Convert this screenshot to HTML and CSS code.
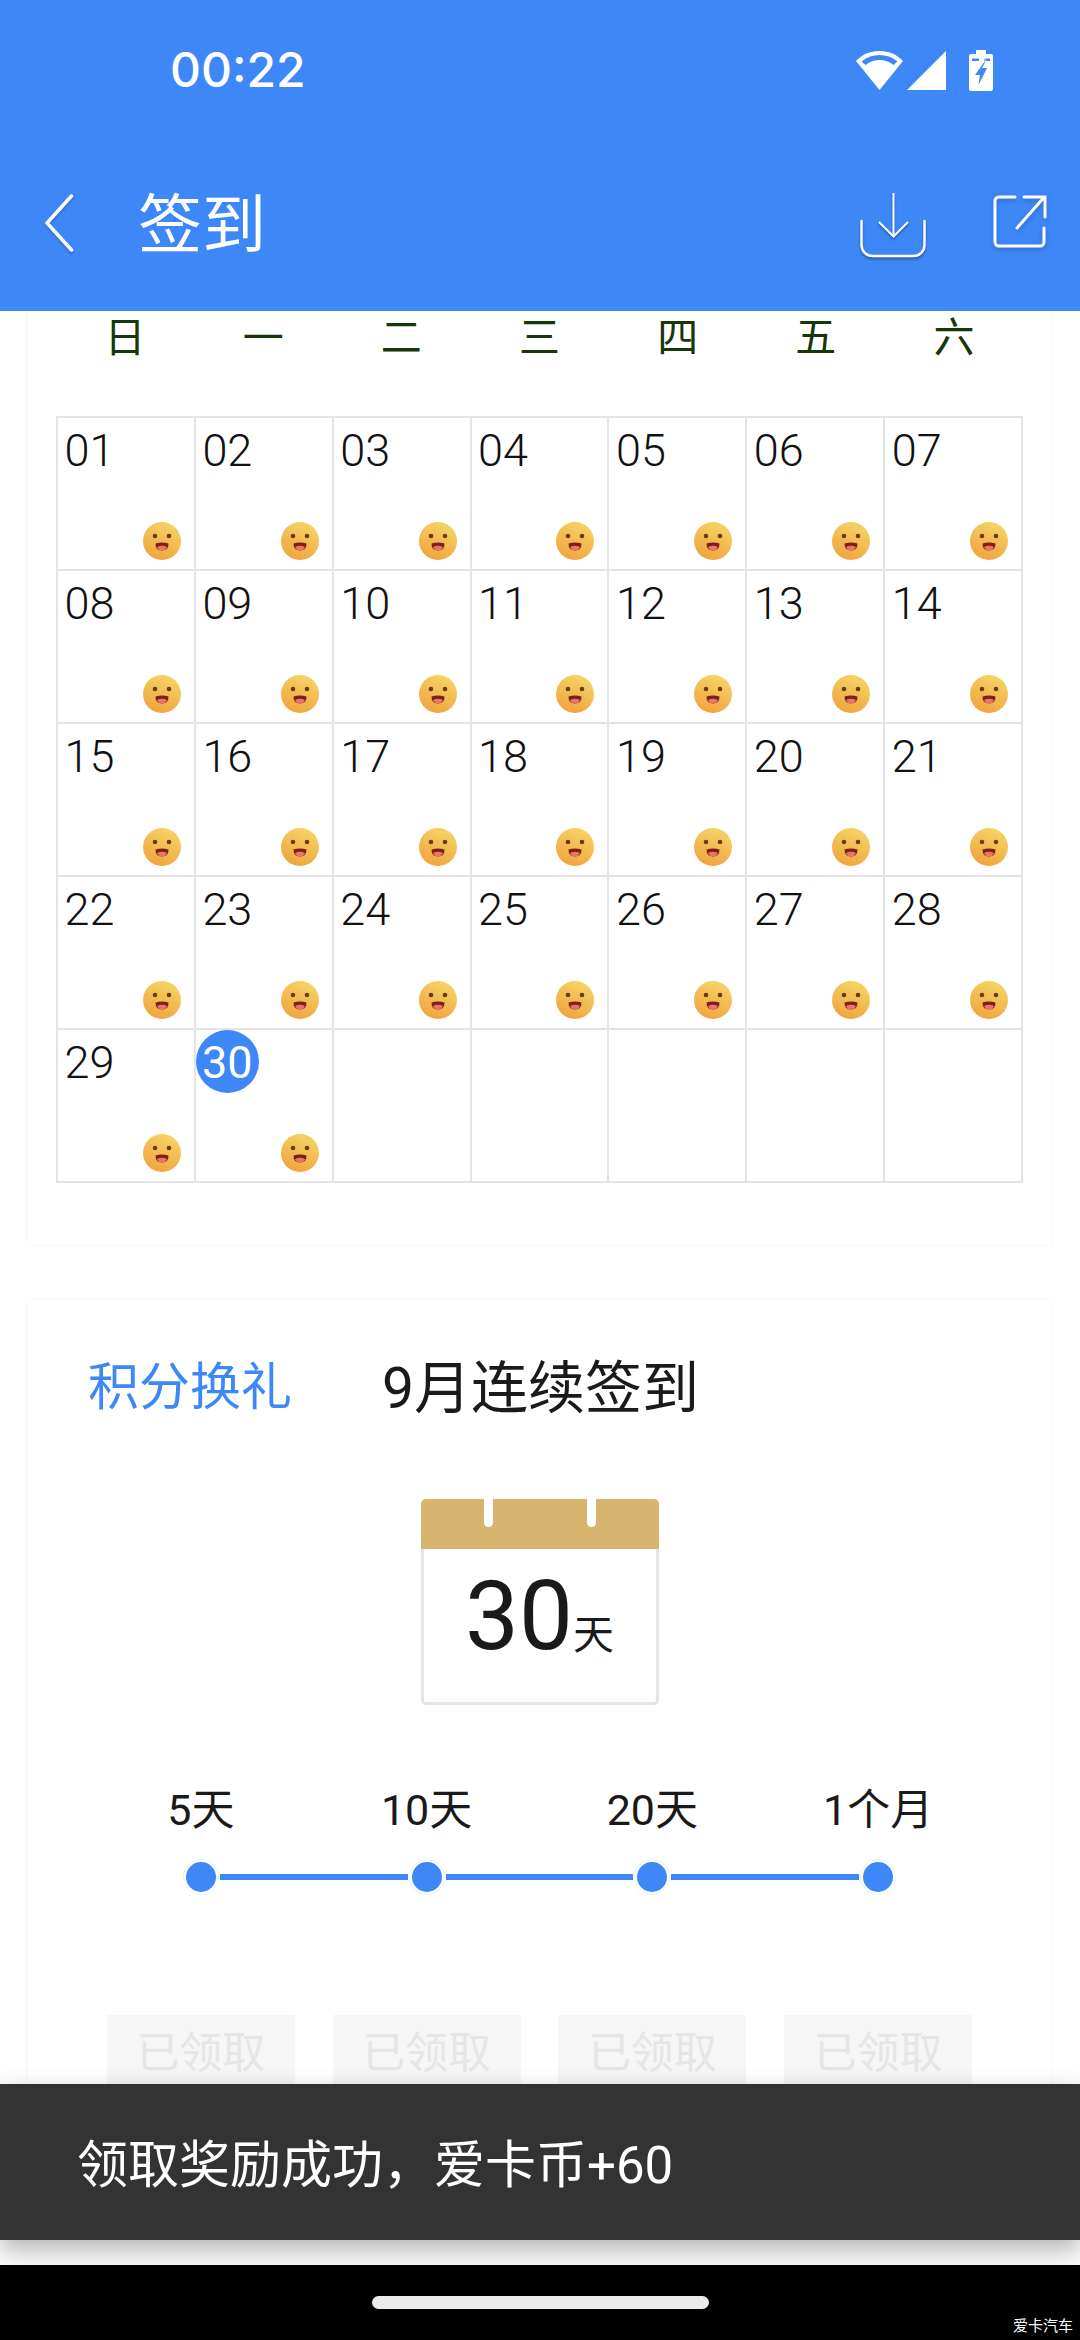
FILE: index.html
```html
<!DOCTYPE html>
<html lang="zh-CN">
<head>
<meta charset="utf-8">
<title>签到</title>
<link rel="stylesheet" href="styles.css">
</head>
<body>
<svg class="defs" width="0" height="0" aria-hidden="true">
  <defs>
    <linearGradient id="faceFill" x1="0.7" y1="0" x2="0.3" y2="1">
      <stop offset="0" stop-color="#f5d566"/>
      <stop offset="1" stop-color="#f0a33f"/>
    </linearGradient>
    <symbol id="face" viewBox="0 0 38 38">
      <circle cx="19" cy="19" r="19" fill="url(#faceFill)"/>
      <circle cx="12" cy="14" r="2.3" fill="#6e3a14"/>
      <circle cx="26" cy="14" r="2.3" fill="#6e3a14"/>
      <path d="M12.500 21.500 Q19 19.500 25.500 21.500 Q25.500 28.500 19 28.500 Q12.500 28.500 12.500 21.500Z" fill="#7f1f1a"/>
      <path d="M14 25 Q19 22.500 24 25 Q22.500 28.500 19 28.500 Q15.500 28.500 14 25Z" fill="#e8746a"/>
    </symbol>
  </defs>
</svg>
<div class="page">
  <header class="header">
    <div class="status">
      <span class="time">00:22</span>
      <div class="status-icons">
        <svg class="ic-wifi" viewBox="0 0 47 39"><path fill="#fff" d="M23.5 39 L0 10 C6 3.5 14 0 23.5 0 S41 3.5 47 10Z"/><path fill="#3d87f7" d="M5.5 10.5 C11 6 17 4 23.5 4 S36 6 41.5 10.5 L37.5 14 C33 10.5 29 9 23.5 9 S14 10.5 9.5 14Z"/></svg>
        <svg class="ic-signal" viewBox="0 0 39 39"><path fill="#fff" d="M39 0V39H0Z"/></svg>
        <svg class="ic-battery" viewBox="0 0 24 41"><path fill="#fff" d="M7 0H17V4H22Q24 4 24 6V39Q24 41 22 41H2Q0 41 0 39V6Q0 4 2 4H7Z"/><path fill="#3d87f7" d="M3 8.5H10V11H3ZM15.500 8.500H21V11H15.500ZM18 8 6 25H11L9.500 35 18 18H13Z"/></svg>
      </div>
    </div>
    <div class="appbar">
      <svg class="ic-back" viewBox="0 0 30 58"><path d="M27.500 2 3 29 27.500 56" fill="none" stroke="#fff" stroke-width="3.500" stroke-linecap="round" stroke-linejoin="round"/></svg>
      <h1 class="title">签到</h1>
      <svg class="ic-download" viewBox="0 0 66 65"><path d="M1.500 28V52A11 11 0 0 0 12.500 63H53.500A11 11 0 0 0 64.500 52V28" fill="none" stroke="#fff" stroke-width="2.500" stroke-linecap="round"/><path d="M33.500 0V43M19 29 33.500 43.500 48 29" fill="none" stroke="#fff" stroke-width="2"/></svg>
      <svg class="ic-share" viewBox="0 0 54 54"><path d="M22 2H6A4 4 0 0 0 2 6V47A4 4 0 0 0 6 51H47A4 4 0 0 0 51 47V33M24 33 50 3.500M31 2H52V22" fill="none" stroke="#fff" stroke-width="3" stroke-linecap="round"/></svg>
    </div>
  </header>

  <main class="main">
    <section class="card card-cal">
      <div class="weekdays">
        <span>日</span><span>一</span><span>二</span><span>三</span><span>四</span><span>五</span><span>六</span>
      </div>
      <div class="month">
        <div class="cell"><span class="date">01</span><svg class="face"><use href="#face"/></svg></div>
        <div class="cell"><span class="date">02</span><svg class="face"><use href="#face"/></svg></div>
        <div class="cell"><span class="date">03</span><svg class="face"><use href="#face"/></svg></div>
        <div class="cell"><span class="date">04</span><svg class="face"><use href="#face"/></svg></div>
        <div class="cell"><span class="date">05</span><svg class="face"><use href="#face"/></svg></div>
        <div class="cell"><span class="date">06</span><svg class="face"><use href="#face"/></svg></div>
        <div class="cell"><span class="date">07</span><svg class="face"><use href="#face"/></svg></div>
        <div class="cell"><span class="date">08</span><svg class="face"><use href="#face"/></svg></div>
        <div class="cell"><span class="date">09</span><svg class="face"><use href="#face"/></svg></div>
        <div class="cell"><span class="date">10</span><svg class="face"><use href="#face"/></svg></div>
        <div class="cell"><span class="date">11</span><svg class="face"><use href="#face"/></svg></div>
        <div class="cell"><span class="date">12</span><svg class="face"><use href="#face"/></svg></div>
        <div class="cell"><span class="date">13</span><svg class="face"><use href="#face"/></svg></div>
        <div class="cell"><span class="date">14</span><svg class="face"><use href="#face"/></svg></div>
        <div class="cell"><span class="date">15</span><svg class="face"><use href="#face"/></svg></div>
        <div class="cell"><span class="date">16</span><svg class="face"><use href="#face"/></svg></div>
        <div class="cell"><span class="date">17</span><svg class="face"><use href="#face"/></svg></div>
        <div class="cell"><span class="date">18</span><svg class="face"><use href="#face"/></svg></div>
        <div class="cell"><span class="date">19</span><svg class="face"><use href="#face"/></svg></div>
        <div class="cell"><span class="date">20</span><svg class="face"><use href="#face"/></svg></div>
        <div class="cell"><span class="date">21</span><svg class="face"><use href="#face"/></svg></div>
        <div class="cell"><span class="date">22</span><svg class="face"><use href="#face"/></svg></div>
        <div class="cell"><span class="date">23</span><svg class="face"><use href="#face"/></svg></div>
        <div class="cell"><span class="date">24</span><svg class="face"><use href="#face"/></svg></div>
        <div class="cell"><span class="date">25</span><svg class="face"><use href="#face"/></svg></div>
        <div class="cell"><span class="date">26</span><svg class="face"><use href="#face"/></svg></div>
        <div class="cell"><span class="date">27</span><svg class="face"><use href="#face"/></svg></div>
        <div class="cell"><span class="date">28</span><svg class="face"><use href="#face"/></svg></div>
        <div class="cell"><span class="date">29</span><svg class="face"><use href="#face"/></svg></div>
        <div class="cell"><span class="date today">30</span><svg class="face"><use href="#face"/></svg></div>
        <div class="cell"></div>
        <div class="cell"></div>
        <div class="cell"></div>
        <div class="cell"></div>
        <div class="cell"></div>
      </div>
    </section>

    <section class="card card-reward">
      <div class="tabs">
        <span class="tab-link">积分换礼</span>
        <span class="tab-title">9月连续签到</span>
      </div>
      <div class="calendar">
        <div class="calendar-top"><i class="notch"></i><i class="notch"></i></div>
        <div class="calendar-body"><span class="calendar-num">30</span><span class="calendar-unit">天</span></div>
      </div>
      <div class="step-labels">
        <span>5天</span><span>10天</span><span>20天</span><span>1个月</span>
      </div>
      <div class="track">
        <i class="dot"></i><i class="line"></i><i class="dot"></i><i class="line"></i><i class="dot"></i><i class="line"></i><i class="dot"></i>
      </div>
      <div class="claims">
        <span class="claim">已领取</span><span class="claim">已领取</span><span class="claim">已领取</span><span class="claim">已领取</span>
      </div>
    </section>
  </main>

  <div class="toast">领取奖励成功，爱卡币+60</div>

  <footer class="nav">
    <i class="handle"></i>
    <span class="watermark">爱卡汽车</span>
  </footer>
</div>
</body>
</html>
```

FILE: styles.css
```css
* { box-sizing: border-box; }
html, body { margin: 0; padding: 0; }
body {
  width: 1080px;
  height: 2340px;
  background: #fefefe;
  color: #1a1a1a;
  font-family: Roboto, "Noto Sans CJK SC", sans-serif;
}
i { display: block; }
.defs { position: absolute; }
.page {
  position: relative;
  width: 1080px;
  height: 2340px;
  overflow: hidden;
  display: flex;
  flex-direction: column;
}

/* header */
.header { background: #3d87f7; color: #fff; height: 311px; flex: none; position: relative; z-index: 2; }
.status {
  height: 140px;
  padding: 0 87px 0 170px;
  display: flex;
  align-items: center;
  justify-content: space-between;
}
.time { font-family: Inter, sans-serif; font-size: 48px; font-weight: 500; line-height: 1; }
.status-icons { display: flex; align-items: center; }
.ic-wifi { width: 47px; height: 39px; }
.ic-signal { width: 39px; height: 39px; margin-left: 4px; }
.ic-battery { width: 24px; height: 41px; margin-left: 23px; }
.appbar {
  height: 171px;
  padding: 0 33px 0 44px;
  display: flex;
  align-items: center;
}
.ic-back { width: 30px; height: 58px; margin-bottom: 5px; filter: drop-shadow(0 2px 1px rgba(0,0,0,.2)); }
.title { margin: 0 0 0 64px; font-size: 64px; font-weight: 400; line-height: 1; flex: 1; }
.ic-download { width: 66px; height: 65px; filter: drop-shadow(0 2px 1px rgba(0,0,0,.35)); }
.ic-share { width: 54px; height: 54px; margin: 0 0 8px 67px; filter: drop-shadow(0 2px 2px rgba(0,0,0,.2)); }

/* main */
.main { flex: 1; min-height: 0; overflow: hidden; padding: 0 29px 0 28px; }
.card { background: #fff; box-shadow: 0 0 3px rgba(0,0,0,.05); }
.card-cal { padding: 0 28px 62px 28px; }
.weekdays {
  display: grid;
  grid-template-columns: repeat(7, 1fr);
  height: 105px;
  text-align: center;
  font-size: 41px;
  line-height: 54px;
  color: #17360a;
}
.month {
  display: grid;
  grid-template-columns: repeat(7, 1fr);
  border-top: 2px solid #e4e4e4;
  border-left: 2px solid #e4e4e4;
}
.cell {
  height: 153px;
  border-right: 2px solid #e4e4e4;
  border-bottom: 2px solid #e4e4e4;
  display: flex;
  flex-direction: column;
  justify-content: space-between;
  align-items: flex-start;
  padding: 0 13px 9px 0;
}
.date {
  width: 63px;
  height: 63px;
  padding-top: 2px;
  line-height: 61px;
  text-align: center;
  font-size: 45px;
  font-weight: 300;
  color: #111;
  border-radius: 50%;
}
.today { background: #3d87f7; color: #fff; font-weight: 400; }
.face { width: 38px; height: 38px; align-self: flex-end; }

/* reward card */
.card-reward { margin-top: 55px; padding: 48px 60px 60px; }
.tabs { display: flex; align-items: center; height: 70px; }
.tab-link { color: #3d87f7; font-size: 51px; margin-right: 90px; }
.tab-title { font-size: 57px; }
.calendar { width: 238px; height: 206px; margin: 81px auto 0; display: flex; flex-direction: column; }
.calendar-top {
  height: 50px;
  background: #d8b56f;
  border-radius: 5px 5px 0 0;
  display: flex;
  justify-content: center;
  gap: 94px;
}
.notch { width: 9px; height: 28px; background: #fff; border-radius: 0 0 5px 5px; }
.calendar-body {
  flex: 1;
  border: 3px solid #e6e6ea;
  border-top: 0;
  border-radius: 0 0 5px 5px;
  display: flex;
  justify-content: center;
  align-items: baseline;
  padding-top: 11px;
}
.calendar-num { font-size: 96px; line-height: 112px; }
.calendar-unit { font-size: 41px; line-height: 1; }
.step-labels {
  display: grid;
  grid-template-columns: repeat(4, 1fr);
  margin-top: 80px;
  text-align: center;
  font-size: 43px;
  line-height: 50px;
}
.track { display: flex; align-items: center; margin-top: 27px; padding: 0 98px; }
.dot { flex: none; width: 30px; height: 30px; border-radius: 50%; background: #3d87f7; box-shadow: 0 0 0 2px #fff, 0 0 0 3px #eef3fb; }
.line { flex: 1; height: 6px; margin: 0 4px; background: #3d87f7; }
.claims { display: grid; grid-template-columns: repeat(4, 1fr); margin-top: 123px; justify-items: center; }
.claim {
  width: 188px;
  height: 90px;
  line-height: 76px;
  text-align: center;
  font-size: 43px;
  background: #f6f6f6;
  color: #e6e6e6;
}

/* toast */
.toast {
  position: absolute;
  left: 0;
  right: 0;
  bottom: 100px;
  height: 156px;
  padding: 0 0 3px 77px;
  display: flex;
  align-items: center;
  background: #333;
  color: #fff;
  font-size: 51px;
  box-shadow: 0 10px 24px rgba(0,0,0,.3);
}

/* nav */
.nav {
  flex: none;
  position: relative;
  z-index: 2;
  height: 75px;
  background: #000;
  display: flex;
  justify-content: center;
  padding-top: 31px;
}
.handle { width: 337px; height: 13px; border-radius: 7px; background: #ebebeb; }
.watermark { position: absolute; right: 7px; bottom: 5px; color: #fff; font-size: 15px; line-height: 18px; }
```
